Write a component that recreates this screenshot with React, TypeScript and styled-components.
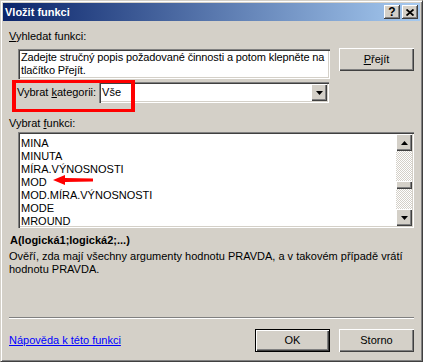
import { FC } from 'react';
import styled, { createGlobalStyle } from 'styled-components';

const GlobalStyle = createGlobalStyle`
  html, body {
    margin: 0;
    padding: 0;
    background: #d4d0c8;
  }
`;

const Window = styled.div`
  box-sizing: border-box;
  width: 423px;
  height: 362px;
  padding: 2px;
  display: flex;
  flex-flow: column nowrap;
  background: #d4d0c8;
  border: 1px solid;
  border-color: #d4d0c8 #404040 #404040 #d4d0c8;
  box-shadow: inset 1px 1px #ffffff, inset -1px -1px #808080;
  font-family: 'Liberation Sans', Arial, sans-serif;
  font-size: 11px;
  line-height: 13px;
  color: #000;
`;

const TitleBar = styled.div`
  height: 18px;
  flex: none;
  display: flex;
  align-items: center;
  justify-content: space-between;
  padding: 0 2px;
  background: linear-gradient(to right, #0a246a, #a6caf0);
`;

const Title = styled.span`
  color: #fff;
  font-weight: bold;
`;

const CaptionButtons = styled.div`
  display: flex;
  gap: 2px;
`;

const CaptionButton = styled.div`
  box-sizing: border-box;
  width: 16px;
  height: 14px;
  display: flex;
  align-items: center;
  justify-content: center;
  background: #d4d0c8;
  box-shadow: inset -1px -1px #404040, inset 1px 1px #ffffff,
    inset -2px -2px #808080;
  font-weight: bold;
  font-size: 12px;
`;

const Body = styled.div`
  flex: 1;
  display: flex;
  flex-flow: column nowrap;
  padding: 0 6px 7px;
`;

const Label = styled.div<{ $top: number; $indent?: number }>`
  margin-top: ${(p) => p.$top}px;
  margin-left: ${(p) => p.$indent ?? 0}px;
  white-space: nowrap;
`;

const Bold = styled(Label)`
  font-weight: bold;
`;

const Key = styled.span`
  text-decoration: underline;
`;

const SearchRow = styled.div`
  margin-top: 5px;
  padding-left: 9px;
  display: flex;
  align-items: flex-start;
`;

const Sunken = styled.div`
  box-sizing: border-box;
  background: #fff;
  box-shadow: inset 1px 1px #808080, inset 2px 2px #404040,
    inset -1px -1px #ffffff, inset -2px -2px #d4d0c8;
`;

const SearchBox = styled(Sunken)`
  margin-top: 1px;
  width: 312px;
  height: 30px;
  padding: 2px 2px 0 3px;
  white-space: nowrap;
  letter-spacing: -0.12px;
`;

const Button = styled.div<{ $default?: boolean }>`
  box-sizing: border-box;
  width: 75px;
  height: 23px;
  display: flex;
  align-items: center;
  justify-content: center;
  background: #d4d0c8;
  box-shadow: inset 1px 1px #ffffff, inset -1px -1px #404040,
    inset -2px -2px #808080;
  border: ${(p) => (p.$default ? '1px solid #000' : 'none')};
`;

const GoButton = styled(Button)`
  margin-left: auto;
`;

const CategoryRow = styled.div`
  position: relative;
  margin-top: 3px;
  margin-left: 8px;
  height: 21px;
  display: flex;
  align-items: center;
`;

const Highlight = styled.div`
  position: absolute;
  left: -5px;
  top: -2px;
  width: 123px;
  height: 32px;
  box-sizing: border-box;
  border: solid #ff0000;
  border-width: 3px 4px;
  pointer-events: none;
`;

const Select = styled(Sunken)`
  margin-left: 3px;
  width: 230px;
  height: 21px;
  display: flex;
  align-items: center;
  padding: 2px 2px 2px 3px;
`;

const SelectValue = styled.span`
  flex: 1;
`;

const ArrowButton = styled.div`
  box-sizing: border-box;
  width: 16px;
  height: 17px;
  flex: none;
  display: flex;
  align-items: center;
  justify-content: center;
  background: #d4d0c8;
  box-shadow: inset 1px 1px #ffffff, inset -1px -1px #404040,
    inset -2px -2px #808080;
`;

const ListWrap = styled.div`
  position: relative;
  margin-top: 2px;
  margin-left: 9px;
  width: 396px;
  height: 96px;
  display: flex;
`;

const ListBox = styled(Sunken)`
  width: 100%;
  height: 100%;
  display: flex;
  padding: 2px;
  overflow: hidden;
`;

const Items = styled.div`
  flex: 1;
  padding: 3px 0 0 1px;
  overflow: hidden;
`;

const Item = styled.div`
  height: 13px;
  white-space: nowrap;
`;

const ScrollBar = styled.div`
  width: 16px;
  flex: none;
  display: flex;
  flex-flow: column nowrap;
`;

const Track = styled.div`
  flex: 1;
  display: flex;
  flex-flow: column nowrap;
  background: repeating-conic-gradient(#d4d0c8 0 25%, #ffffff 0 50%) 0 0 / 2px 2px;
`;

const Thumb = styled.div`
  margin-top: 30px;
  height: 8px;
  background: #d4d0c8;
  box-shadow: inset 1px 1px #ffffff, inset -1px -1px #404040,
    inset -2px -2px #808080;
`;

const ArrowMark = styled.svg`
  position: absolute;
  left: 34px;
  top: 42px;
  pointer-events: none;
`;

const Separator = styled.div`
  margin-top: auto;
  height: 0;
  border-top: 1px solid #808080;
  border-bottom: 1px solid #ffffff;
`;

const Footer = styled.div`
  margin-top: 10px;
  display: flex;
  align-items: center;
  gap: 9px;
`;

const HelpLink = styled.a`
  color: #0000ff;
  text-decoration: underline;
  margin-right: auto;
`;

const Triangle: FC<{ up?: boolean }> = ({ up }) => (
  <svg width="7" height="4" viewBox="0 0 7 4">
    <path d={up ? 'M3.5 0 L7 4 L0 4 Z' : 'M0 0 L7 0 L3.5 4 Z'} fill="#000" />
  </svg>
);

const functions = [
  'MINA',
  'MINUTA',
  'MÍRA.VÝNOSNOSTI',
  'MOD',
  'MOD.MÍRA.VÝNOSNOSTI',
  'MODE',
  'MROUND',
];

export default function App() {
  return (
    <>
      <GlobalStyle />
      <Window>
        <TitleBar>
          <Title>Vložit funkci</Title>
          <CaptionButtons>
            <CaptionButton>?</CaptionButton>
            <CaptionButton>
              <svg width="8" height="7" viewBox="0 0 8 7">
                <path d="M0.5 0.5 L7.5 6.5 M7.5 0.5 L0.5 6.5" stroke="#000" strokeWidth="1.8" />
              </svg>
            </CaptionButton>
          </CaptionButtons>
        </TitleBar>
        <Body>
          <Label $top={9}>
            <Key>V</Key>yhledat funkci:
          </Label>
          <SearchRow>
            <SearchBox>
              Zadejte stručný popis požadované činnosti a potom klepněte na
              <br />
              tlačítko Přejít.
            </SearchBox>
            <GoButton>
              <span>
                <Key>P</Key>řejít
              </span>
            </GoButton>
          </SearchRow>
          <CategoryRow>
            <span>
              Vybrat <Key>k</Key>ategorii:
            </span>
            <Select>
              <SelectValue>Vše</SelectValue>
              <ArrowButton>
                <Triangle />
              </ArrowButton>
            </Select>
            <Highlight />
          </CategoryRow>
          <Label $top={14}>
            Vybrat <Key>f</Key>unkci:
          </Label>
          <ListWrap>
            <ListBox>
              <Items>
                {functions.map((f) => (
                  <Item key={f}>{f}</Item>
                ))}
              </Items>
              <ScrollBar>
                <ArrowButton>
                  <Triangle up />
                </ArrowButton>
                <Track>
                  <Thumb />
                </Track>
                <ArrowButton>
                  <Triangle />
                </ArrowButton>
              </ScrollBar>
            </ListBox>
            <ArrowMark width="42" height="12" viewBox="0 0 42 12">
              <path d="M1 6 L13 1 L13 4 L41 4.5 L41 7.5 L13 8 L13 11 Z" fill="#ff0000" />
            </ArrowMark>
          </ListWrap>
          <Bold $top={6} $indent={1}>
            A(logická1;logická2;...)
          </Bold>
          <Label $top={3}>
            Ověří, zda mají všechny argumenty hodnotu PRAVDA, a v takovém případě vrátí
            <br />
            hodnotu PRAVDA.
          </Label>
          <Separator />
          <Footer>
            <HelpLink href="#">Nápověda k této funkci</HelpLink>
            <Button $default>OK</Button>
            <Button>Storno</Button>
          </Footer>
        </Body>
      </Window>
    </>
  );
}
